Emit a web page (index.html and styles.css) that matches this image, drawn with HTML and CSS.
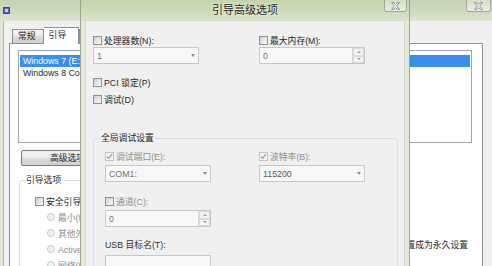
FILE: index.html
```html
<!DOCTYPE html>
<html lang="zh-CN">
<head>
<meta charset="utf-8">
<title>引导高级选项</title>
<link rel="stylesheet" href="styles.css">
</head>
<body>
<div class="screen">
  <div class="win">
    <div class="win-title">
      <span class="app-icon"><span class="app-icon-in"></span></span>
      <span class="close win-close">
        <svg width="9" height="8" viewBox="0 0 9 8"><path d="M0.6 0.6h2.2l1.7 1.8 1.7-1.8h2.2L5.6 4l2.8 3.4H6.2L4.5 5.6 2.8 7.4H0.6L3.4 4z" fill="#f6f6f6" stroke="#7a7a7a" stroke-width="0.8"/></svg>
      </span>
    </div>
    <div class="win-client">
      <div class="tabs">
        <div class="tab">常规</div>
        <div class="tab active">引导</div>
        <div class="tab">服务</div>
      </div>
      <div class="panel">
        <div class="listbox">
          <div class="item sel">Windows 7 (E:\Windows) : 当前操作系统; 默认操作系统</div>
          <div class="item">Windows 8 Consumer Preview (C:\Windows)</div>
        </div>
        <div class="btn-row">
          <button class="btn">高级选项(V)...</button>
          <button class="btn">设为默认值(S)</button>
        </div>
        <div class="options">
          <fieldset class="group boot-group">
            <legend>引导选项</legend>
            <div class="opt-list">
              <div class="row"><span class="box"></span><span>安全引导(F)</span></div>
              <div class="row radio dis"><span class="dot"></span><span>最小(M)</span></div>
              <div class="row radio dis"><span class="dot"></span><span>其他外壳(L)</span></div>
              <div class="row radio dis"><span class="dot"></span><span>Active Directory 修复(P)</span></div>
              <div class="row radio dis"><span class="dot"></span><span>网络(N)</span></div>
            </div>
          </fieldset>
          <div class="side">
            <div class="row"><span class="box"></span><span>使所有引导设置成为永久设置</span></div>
          </div>
        </div>
      </div>
    </div>
  </div>

  <div class="dialog">
    <div class="dlg-title">
      <span></span>
      <span class="dlg-text">引导高级选项</span>
      <span class="close dlg-close">
        <svg width="9" height="8" viewBox="0 0 9 8"><path d="M0.6 0.6h2.2l1.7 1.8 1.7-1.8h2.2L5.6 4l2.8 3.4H6.2L4.5 5.6 2.8 7.4H0.6L3.4 4z" fill="#f6f6f6" stroke="#7a7a7a" stroke-width="0.8"/></svg>
      </span>
    </div>
    <div class="dlg-client">
      <div class="grid2 lrow">
        <div class="row"><span class="box"></span><span>处理器数(N):</span></div>
        <div class="row"><span class="box"></span><span>最大内存(M):</span></div>
      </div>
      <div class="grid2 frow">
        <div class="field combo"><span>1</span><span class="arrow"></span></div>
        <div class="field spin"><span>0</span><span class="spin-btns"><span class="sb"><span class="up"></span></span><span class="sb"><span class="down"></span></span></span></div>
      </div>
      <div class="row pci"><span class="box"></span><span>PCI 锁定(P)</span></div>
      <div class="row dbg"><span class="box"></span><span>调试(D)</span></div>

      <fieldset class="group dgroup">
        <legend>全局调试设置</legend>
        <div class="ginner">
          <div class="grid2g lrow">
            <div class="row dis"><span class="box checked"><svg width="7" height="7" viewBox="0 0 7 7"><path d="M1 3.6l1.6 1.8L6 1.2" fill="none" stroke="#9a9a9a" stroke-width="1.1"/></svg></span><span>调试端口(E):</span></div>
            <div class="row dis"><span class="box checked"><svg width="7" height="7" viewBox="0 0 7 7"><path d="M1 3.6l1.6 1.8L6 1.2" fill="none" stroke="#9a9a9a" stroke-width="1.1"/></svg></span><span>波特率(B):</span></div>
          </div>
          <div class="grid2g frow3">
            <div class="field combo"><span>COM1:</span><span class="arrow"></span></div>
            <div class="field combo dark"><span>115200</span><span class="arrow"></span></div>
          </div>
          <div class="row dis chan"><span class="box"></span><span>通道(C):</span></div>
          <div class="field spin frow3"><span>0</span><span class="spin-btns"><span class="sb"><span class="up"></span></span><span class="sb"><span class="down"></span></span></span></div>
          <div class="row usb"><span>USB 目标名(T):</span></div>
          <div class="field text usbbox"></div>
        </div>
      </fieldset>
    </div>
  </div>
</div>
</body>
</html>
```

FILE: styles.css
```css
html, body {
  margin: 0;
  padding: 0;
}
body {
  width: 492px;
  height: 266px;
  overflow: hidden;
  background: #f0f0f0;
  font-family: "Liberation Sans", "Noto Sans CJK SC", sans-serif;
  font-size: 8.8px;
  color: #262626;
}
.screen {
  position: relative;
  width: 492px;
  height: 266px;
  overflow: hidden;
}

/* ---------- back window ---------- */
.win {
  width: 492px;
  height: 266px;
  display: flex;
  flex-direction: column;
  background: #dfe5d4;
}
.win-title {
  height: 21px;
  flex: none;
  display: flex;
  align-items: flex-start;
  background: linear-gradient(180deg, #c6d2b6 0%, #cfdabf 55%, #dde5d1 100%);
}
.app-icon {
  width: 7px;
  height: 7px;
  margin: 7px 0 0 3px;
  box-sizing: border-box;
  background: #5562b8;
  border: 1px solid #3c4796;
  display: flex;
  align-items: flex-end;
  justify-content: center;
}
.app-icon-in {
  width: 3px;
  height: 3px;
  margin-bottom: 1px;
  background: #c9d2f2;
}
.close {
  height: 12px;
  box-sizing: border-box;
  border: 1px solid rgba(110, 122, 98, 0.55);
  border-top: none;
  border-radius: 0 0 3px 3px;
  background: linear-gradient(180deg, rgba(255,255,255,0.25), rgba(255,255,255,0.55));
  display: flex;
  align-items: center;
  justify-content: center;
}
.win-close {
  width: 25px;
  margin-left: auto;
  margin-right: 1px;
}
.win-client {
  flex: 1;
  display: flex;
  flex-direction: column;
  margin-left: 3px;
  border-left: 1px solid #b3bba6;
  background: #f0f0f0;
  min-height: 0;
}
.tabs {
  height: 16px;
  flex: none;
  display: flex;
  align-items: flex-end;
  margin: 6px 0 0 8px;
}
.tab {
  height: 14px;
  box-sizing: border-box;
  border: 1px solid #8d9099;
  border-bottom: none;
  padding: 0 7px 0 5px;
  line-height: 13px;
  background: linear-gradient(180deg, #f3f3f3 0%, #ebebeb 50%, #dcdcdc 50%, #d0d0d0 100%);
  color: #222;
}
.tab.active {
  height: 17px;
  line-height: 14px;
  padding: 0 12px 0 5px;
  background: #fff;
  margin-bottom: -1px;
  border-left: none;
  position: relative;
  z-index: 1;
}
.panel {
  flex: 1;
  margin-left: 5px;
  width: 474px;
  box-sizing: border-box;
  border: 1px solid #8d9099;
  background: #fff;
  padding: 6px 10px 0 8px;
}
.listbox {
  height: 93px;
  box-sizing: border-box;
  border: 1px solid #a0a4ab;
  padding: 4px 1px 0 1px;
}
.item {
  height: 12px;
  line-height: 12px;
  padding-left: 3px;
  white-space: nowrap;
  overflow: hidden;
  color: #262626;
}
.item.sel {
  background: #3790ee;
  color: #fff;
}
.btn-row {
  display: flex;
  gap: 6px;
  margin: 7px 0 0 3px;
}
.btn {
  width: 112px;
  height: 16px;
  box-sizing: border-box;
  padding: 0;
  border: 1px solid #7a7a7a;
  border-radius: 2px;
  background: linear-gradient(180deg, #f2f2f2 0%, #ebebeb 50%, #dddddd 50%, #cfcfcf 100%);
  font: inherit;
  color: #262626;
  line-height: 14px;
}
.options {
  display: flex;
  margin-top: 8px;
}
.group {
  margin: 0;
  min-width: 0;
  box-sizing: border-box;
  border: 1px solid #d5dfe5;
  border-radius: 3px;
}
.group legend {
  padding: 0 1px;
  height: 12px;
  line-height: 12px;
}
.boot-group {
  width: 300px;
  height: 110px;
  margin-left: 1px;
  padding: 0 0 0 5px;
}
.opt-list {
  margin: 9px 0 0 10px;
  display: flex;
  flex-direction: column;
  gap: 4px;
}
.side {
  flex: 1;
  display: flex;
  flex-direction: column;
  align-items: flex-end;
  padding: 64px 4px 0 0;
}

/* ---------- shared controls ---------- */
.row {
  height: 12px;
  display: flex;
  align-items: center;
  white-space: nowrap;
}
.box {
  flex: none;
  width: 9px;
  height: 9px;
  box-sizing: border-box;
  margin-right: 2px;
  border: 1px solid #8e8f8f;
  background: linear-gradient(135deg, #d0d0d0 0%, #e8e8e8 55%, #f8f8f8 100%);
  display: flex;
  align-items: center;
  justify-content: center;
}
.box.checked {
  border-color: #c2c2c2;
  background: #f4f4f4;
}
.dis {
  color: #8e8e8e;
}
.radio {
  margin-left: 12px;
}
.dot {
  flex: none;
  width: 8px;
  height: 8px;
  box-sizing: border-box;
  margin-right: 3px;
  border-radius: 50%;
  border: 1px solid #c8c8c8;
  background: #f1f1f1;
}
.field {
  width: 106px;
  height: 17px;
  box-sizing: border-box;
  border: 1px solid #c6c6c6;
  background: #f7f7f7;
  display: flex;
  align-items: center;
  padding-left: 3px;
  color: #757575;
  white-space: nowrap;
}
.field.dark {
  color: #555;
}
.arrow {
  margin-left: auto;
  margin-right: 3px;
  width: 0;
  height: 0;
  border-left: 2.5px solid transparent;
  border-right: 2.5px solid transparent;
  border-top: 3px solid #8c8c8c;
}
.spin-btns {
  margin-left: auto;
  width: 12px;
  height: 15px;
  display: flex;
  flex-direction: column;
  box-sizing: border-box;
  border-left: 1px solid #d6d6d6;
}
.sb {
  flex: 1;
  display: flex;
  align-items: center;
  justify-content: center;
  box-sizing: border-box;
  border: 1px solid #dadada;
  background: #f4f4f4;
}
.up, .down {
  width: 0;
  height: 0;
  border-left: 2px solid transparent;
  border-right: 2px solid transparent;
}
.up { border-bottom: 2px solid #9a9a9a; }
.down { border-top: 2px solid #9a9a9a; }

/* ---------- dialog ---------- */
.dialog {
  position: absolute;
  left: 80px;
  top: 0;
  width: 330px;
  height: 280px;
  box-sizing: border-box;
  border-left: 1px solid #9da691;
  border-right: 1px solid #9da691;
  background: #e5ead8;
  display: flex;
  flex-direction: column;
}
.dlg-title {
  height: 21px;
  flex: none;
  display: grid;
  grid-template-columns: 1fr auto 1fr;
  align-items: start;
  background: linear-gradient(180deg, #c4d3ae 0%, #cddab9 50%, #d9e3cb 100%);
}
.dlg-text {
  font-size: 11px;
  line-height: 11px;
  padding-top: 5px;
  color: #1e1e1e;
  text-shadow: 0 0 4px #eef3e6, 0 0 2px #eef3e6;
}
.dlg-close {
  justify-self: end;
  width: 23px;
  margin-right: 2px;
}
.dlg-client {
  flex: 1;
  margin: 0 5px;
  background: #f0f0f0;
  box-shadow: 0 0 0 1px #d3d9c7;
  padding: 13px 0 0 7px;
}
.grid2 {
  display: grid;
  grid-template-columns: 166px 106px;
}
.frow { margin-top: 1px; }
.pci { margin-top: 12px; }
.dbg { margin-top: 5px; }
.dgroup {
  margin-top: 27px;
  width: 305px;
  height: 160px;
  padding: 0 0 0 6px;
}
.ginner {
  padding: 6px 0 0 5px;
}
.grid2g {
  display: grid;
  grid-template-columns: 154px 106px;
}
.frow3 { margin-top: 3px; }
.chan { margin-top: 13px; }
.usb { margin-top: 11px; color: #303030; }
.usbbox { margin-top: 5px; }
```
